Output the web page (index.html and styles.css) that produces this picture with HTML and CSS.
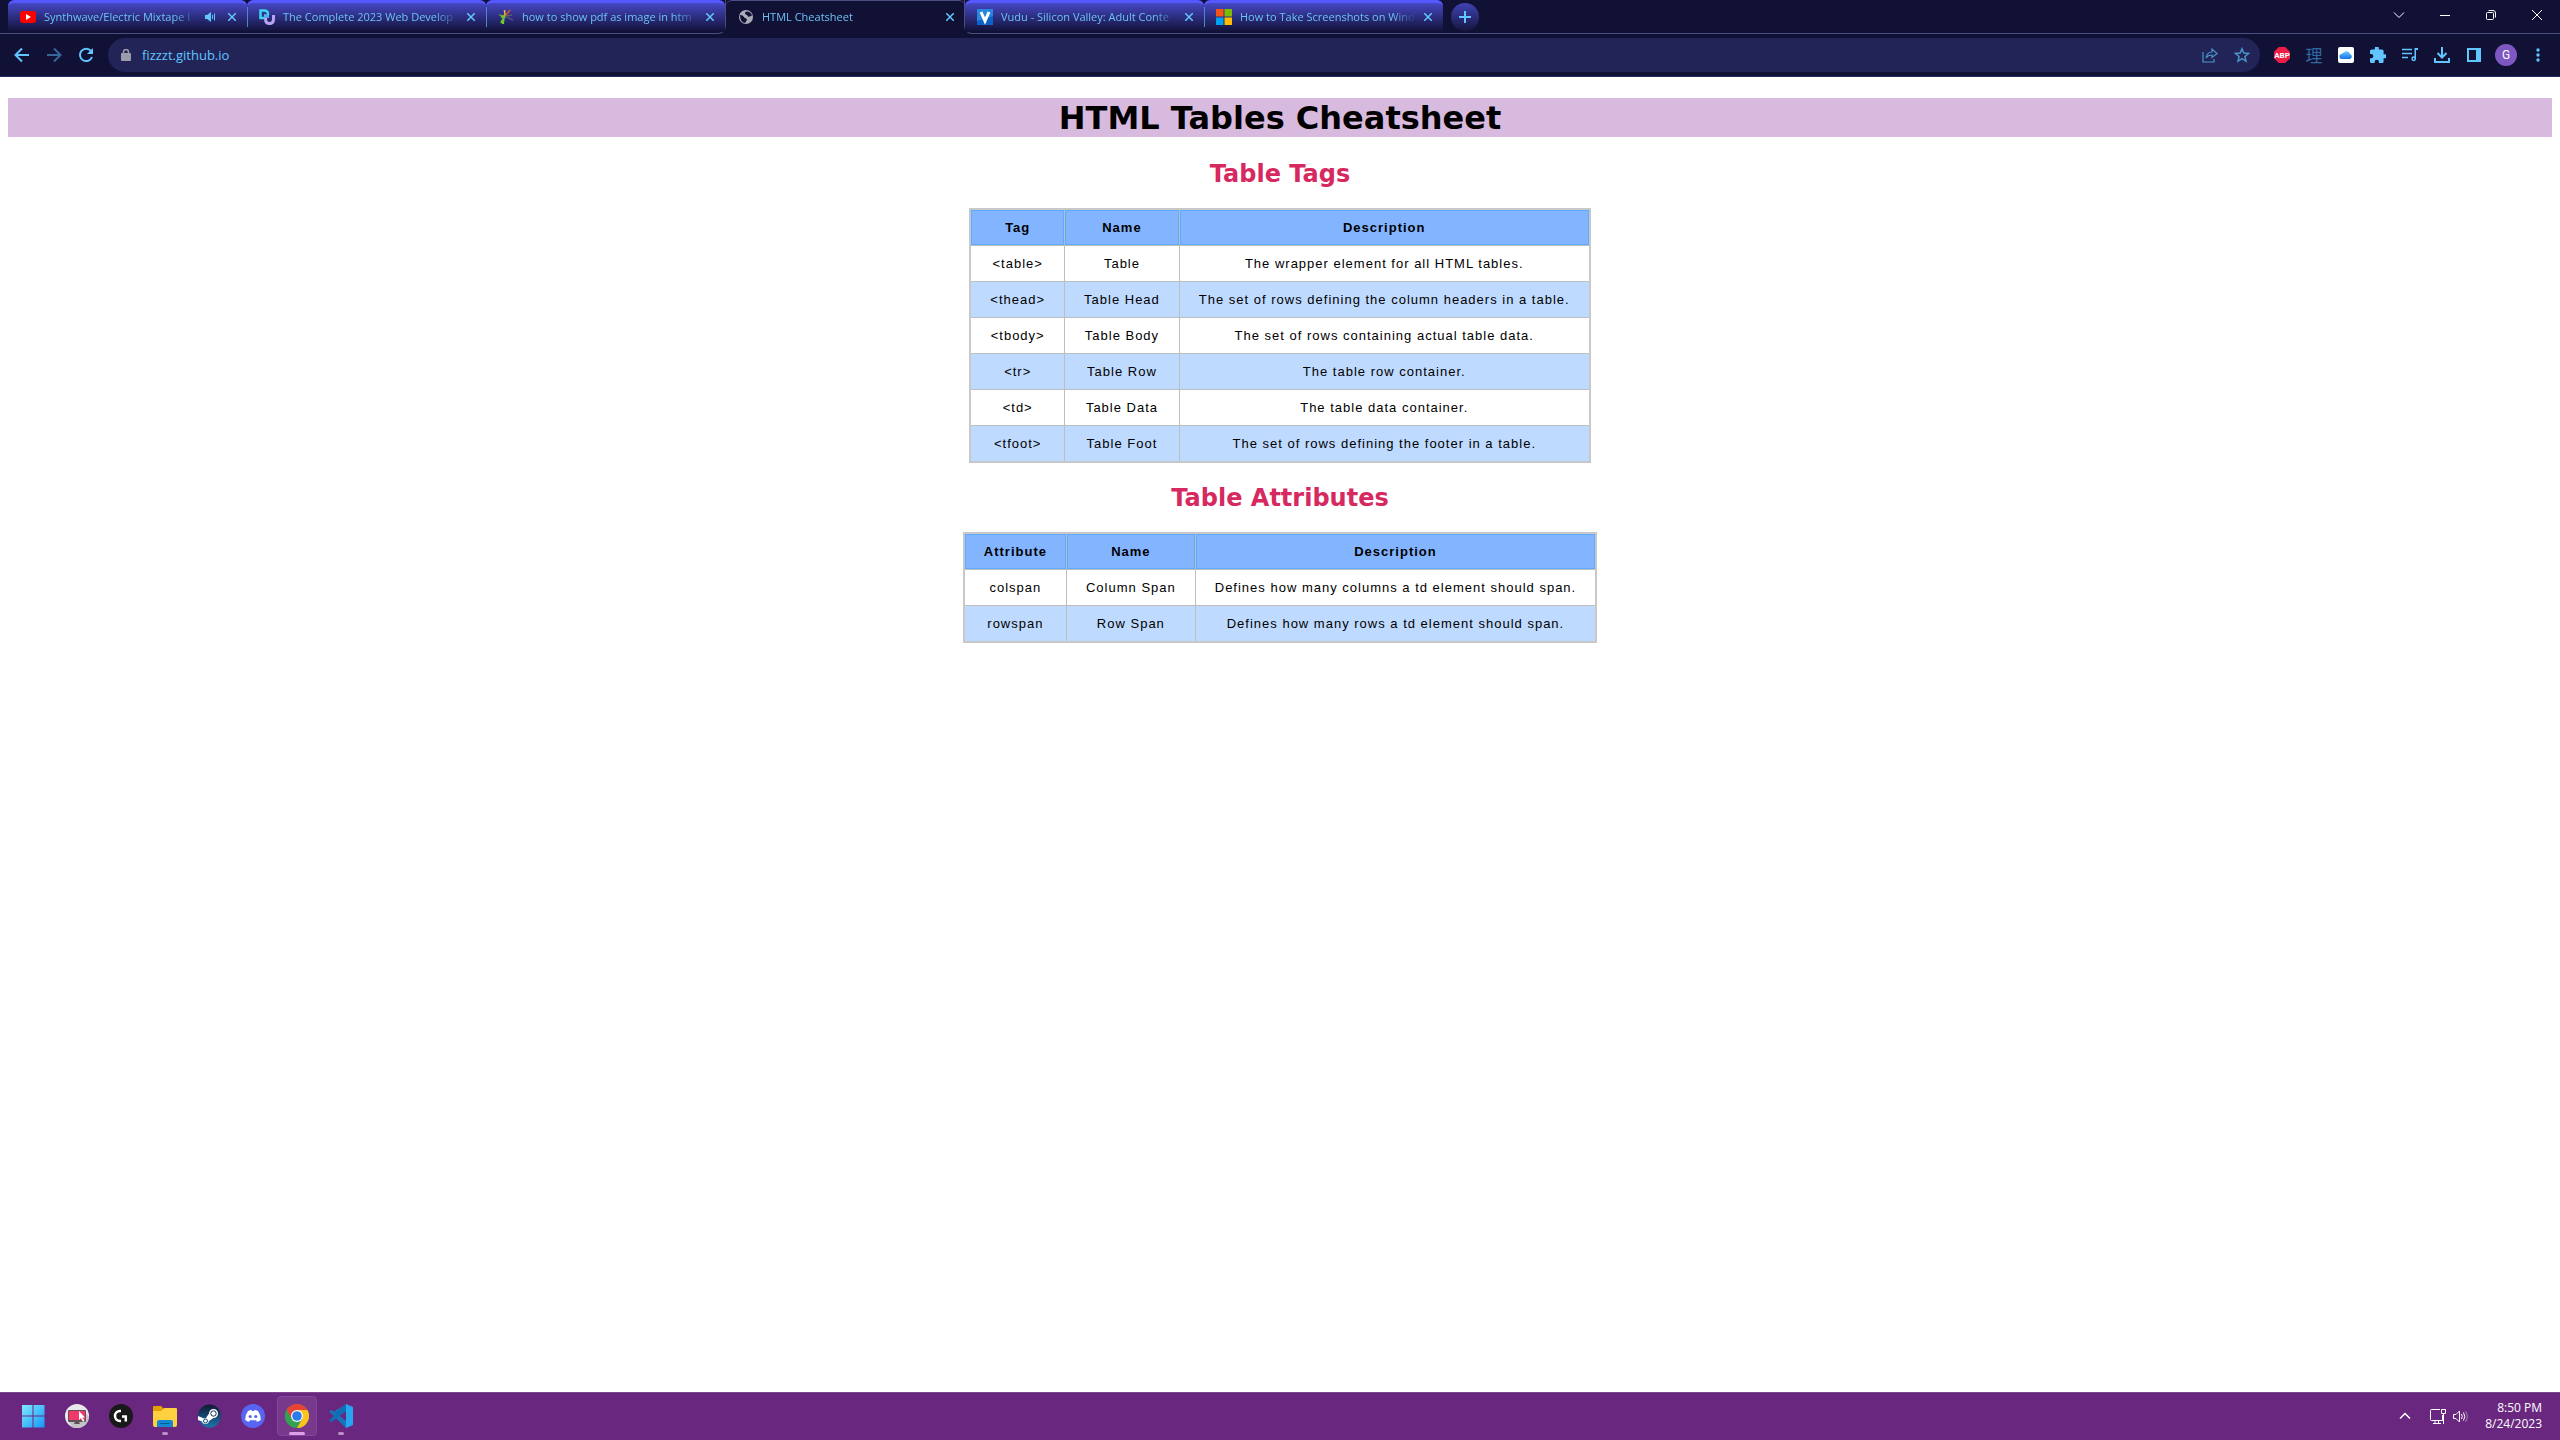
FILE: index.html
```html
<!DOCTYPE html>
<html lang="en">
<head>
<meta charset="utf-8">
<title>HTML Cheatsheet</title>
<link rel="stylesheet" href="styles.css">
</head>
<body>
<header class="browser">
  <div class="strip">
    <div class="group group-left">
      <div class="tab">
        <svg class="favicon" viewBox="0 0 16 16"><rect y="2" width="16" height="12" rx="3" fill="#f00"/><path d="M6 5l5 3-5 3z" fill="#fff"/></svg>
        <button class="title">Synthwave/Electric Mixtape I</button>
        <button class="mini sound" aria-label="Mute tab"><svg width="12" height="12" viewBox="0 0 12 12"><path d="M1 4h2l4-3v10L3 8H1z" fill="currentColor"/><path d="M8.500 4v4M10.500 2.500v7" stroke="currentColor" stroke-width="1" fill="none"/></svg></button>
        <button class="mini" aria-label="Close tab"><svg width="8" height="8" viewBox="0 0 8 8"><path class="line" d="M0 0l8 8M8 0L0 8"/></svg></button>
      </div>
      <div class="tab">
        <svg class="favicon" viewBox="0 0 16 16"><path d="M1.500 1.500H5q4 0 4 3.500T5 9H1.500z" fill="none" stroke="#3cd5ee" stroke-width="2.500"/><path d="M6.500 8v2q0 4.500 4 4.500t4-4.500V6" fill="none" stroke="#b9a1f3" stroke-width="3"/><path d="M5 5q5 0 5 4H5z" fill="#5aa8f2"/></svg>
        <button class="title">The Complete 2023 Web Develop</button>
        <button class="mini" aria-label="Close tab"><svg width="8" height="8" viewBox="0 0 8 8"><path class="line" d="M0 0l8 8M8 0L0 8"/></svg></button>
      </div>
      <div class="tab">
        <svg class="favicon" viewBox="0 0 16 16" fill="none" stroke-width="1.500"><path d="M6 7L1 6" stroke="#6a8a3a"/><path d="M7 7L6.500 1" stroke="#e8b93c"/><path d="M8 6l4-5" stroke="#e0562f"/><path d="M8 7l6-1" stroke="#5b5b66"/><path d="M8 8l7 3" stroke="#5a4a86"/><path d="M7 7l-4 7M6 6l-1 9M3 8l4-1" stroke="#6fc72e" stroke-width="2"/></svg>
        <button class="title">how to show pdf as image in htm</button>
        <button class="mini" aria-label="Close tab"><svg width="8" height="8" viewBox="0 0 8 8"><path class="line" d="M0 0l8 8M8 0L0 8"/></svg></button>
      </div>
    </div>
    <div class="tab active">
      <svg class="favicon" viewBox="0 0 16 16"><circle cx="8" cy="8" r="7" fill="#a9adb8"/><path d="M2 6q3 0 4 2t2 1l1 2-2 3q-5-1-5-8zM8 2.500q-2 2 0 3t2 2 4-1q-1-4-6-4z" fill="#111136"/></svg>
      <button class="title">HTML Cheatsheet</button>
      <button class="mini" aria-label="Close tab"><svg width="8" height="8" viewBox="0 0 8 8"><path class="line" d="M0 0l8 8M8 0L0 8"/></svg></button>
    </div>
    <div class="group group-right">
      <div class="tab">
        <svg class="favicon" viewBox="0 0 16 16"><rect width="16" height="16" fill="#0d62c9"/><path d="M0 0h16v7L0 12z" fill="#2787e0"/><path d="M4 3l4 9 4-9" fill="none" stroke="#fff" stroke-width="3"/></svg>
        <button class="title">Vudu - Silicon Valley: Adult Conte</button>
        <button class="mini" aria-label="Close tab"><svg width="8" height="8" viewBox="0 0 8 8"><path class="line" d="M0 0l8 8M8 0L0 8"/></svg></button>
      </div>
      <div class="tab">
        <svg class="favicon" viewBox="0 0 16 16"><path d="M0 0h7.500v7.500H0z" fill="#f65314"/><path d="M8.500 0H16v7.500H8.500z" fill="#7cbb00"/><path d="M0 8.500h7.500V16H0z" fill="#00a1f1"/><path d="M8.500 8.500H16V16H8.500z" fill="#ffbb00"/></svg>
        <button class="title">How to Take Screenshots on Wind</button>
        <button class="mini" aria-label="Close tab"><svg width="8" height="8" viewBox="0 0 8 8"><path class="line" d="M0 0l8 8M8 0L0 8"/></svg></button>
      </div>
      <button class="new-tab" aria-label="New tab"><svg width="12" height="12" viewBox="0 0 12 12"><path d="M6 0v12M0 6h12" stroke="currentColor" stroke-width="2"/></svg></button>
      <div class="window-controls">
        <button aria-label="Search tabs"><svg width="12" height="12" viewBox="0 0 12 12"><path class="thin" d="M1 3.500l5 5 5-5"/></svg></button>
        <button aria-label="Minimize"><svg width="10" height="10" viewBox="0 0 10 10"><path class="thin" d="M0 5.500h10"/></svg></button>
        <button aria-label="Restore"><svg width="10" height="10" viewBox="0 0 10 10"><rect class="thin" x=".5" y="2.500" width="7" height="7" rx="1"/><path class="thin" d="M2.500.5H7q2.500 0 2.500 2.500v4.500"/></svg></button>
        <button aria-label="Close"><svg width="10" height="10" viewBox="0 0 10 10"><path class="thin" d="M0 0l10 10M10 0L0 10"/></svg></button>
      </div>
    </div>
  </div>
  <div class="toolbar">
    <button class="tool" aria-label="Back"><svg width="16" height="16" viewBox="0 0 16 16"><path d="M15 8H2M8 1.500L1.500 8 8 14.500" fill="none" stroke="currentColor" stroke-width="2"/></svg></button>
    <button class="tool dim" aria-label="Forward"><svg width="16" height="16" viewBox="0 0 16 16"><path d="M1 8h13M8 1.500L14.500 8 8 14.500" fill="none" stroke="currentColor" stroke-width="2"/></svg></button>
    <button class="tool" aria-label="Reload"><svg width="16" height="16" viewBox="0 0 16 16"><path d="M13 4a6.200 6.200 0 1 0 1 6" fill="none" stroke="currentColor" stroke-width="2"/><path d="M15 1v6H9z" fill="currentColor"/></svg></button>
    <div class="omnibox">
      <svg class="lock" width="10" height="12" viewBox="0 0 10 12"><rect x="0" y="4" width="10" height="8" rx="1" fill="currentColor"/><path d="M2.500 5V3a2.500 2.500 0 0 1 5 0v2" fill="none" stroke="currentColor" stroke-width="1.500"/></svg>
      <input class="url" type="text" value="fizzzt.github.io" aria-label="Address">
      <button class="tool soft" aria-label="Share"><svg width="16" height="16" viewBox="0 0 16 16" fill="none" stroke="currentColor" stroke-width="1.200"><path d="M1 5v10h11v-3"/><path d="M4 11q1-6 6-6V2l5 4.500-5 4V8q-4 0-6 3z"/></svg></button>
      <button class="tool soft" aria-label="Bookmark"><svg width="16" height="16" viewBox="0 0 16 16"><path d="M8 1.800l1.800 4.300 4.700.4-3.600 3 1.100 4.600L8 11.700l-4 2.400 1.100-4.600-3.600-3 4.700-.4z" fill="none" stroke="currentColor" stroke-width="1.500"/></svg></button>
    </div>
    <button class="tool abp" aria-label="Adblock Plus">ABP</button>
    <button class="tool kanji" aria-label="Rikaikun">理</button>
    <button class="tool" aria-label="iCloud"><svg width="16" height="16" viewBox="0 0 16 16"><defs><linearGradient id="cloud" x2="0" y2="1"><stop stop-color="#65c8fb"/><stop offset="1" stop-color="#1674e8"/></linearGradient></defs><rect width="16" height="16" rx="2" fill="#fff"/><path d="M4 12a2.500 2.500 0 0 1-.3-5A2.500 2.500 0 0 1 6 5.500a3.500 3.500 0 0 1 6 1.500 2.600 2.600 0 0 1 0 5z" fill="url(#cloud)"/></svg></button>
    <button class="tool" aria-label="Extensions"><svg width="16" height="16" viewBox="2 2 20 20"><path fill="currentColor" d="M20.500 11H19V7c0-1.100-.9-2-2-2h-4V3.500a2.500 2.500 0 0 0-5 0V5H4c-1.100 0-2 .9-2 2v3.800h1.500a2.700 2.700 0 0 1 0 5.400H2V20c0 1.100.9 2 2 2h3.800v-1.500a2.700 2.700 0 0 1 5.400 0V22H17c1.100 0 2-.9 2-2v-4h1.500a2.500 2.500 0 0 0 0-5z"/></svg></button>
    <button class="tool" aria-label="Media"><svg width="16" height="14" viewBox="0 0 16 14"><path d="M0 1.500h10M0 5.500h10M0 9.500h6" stroke="currentColor" stroke-width="1.500"/><path d="M12.500 0H16v2h-2v9h-1.500z" fill="currentColor"/><circle cx="11.700" cy="10.800" r="1.700" fill="none" stroke="currentColor" stroke-width="1.500"/></svg></button>
    <button class="tool" aria-label="Downloads"><svg width="16" height="16" viewBox="0 0 16 16"><path d="M8 0v10M3.500 6L8 10.500 12.500 6M1 11v4h14v-4" fill="none" stroke="currentColor" stroke-width="2"/></svg></button>
    <button class="tool" aria-label="Side panel"><svg width="14" height="14" viewBox="0 0 14 14"><rect x="1" y="1" width="12" height="12" fill="none" stroke="currentColor" stroke-width="2"/><path d="M9 0h5v14H9z" fill="currentColor"/></svg></button>
    <button class="tool" aria-label="Profile"><span class="avatar">G</span></button>
    <button class="tool" aria-label="Menu"><svg width="4" height="14" viewBox="0 0 4 14" fill="currentColor"><circle cx="2" cy="2" r="1.700"/><circle cx="2" cy="7" r="1.700"/><circle cx="2" cy="12" r="1.700"/></svg></button>
  </div>
</header>

<main class="page">
  <h1>HTML Tables Cheatsheet</h1>
  <h2>Table Tags</h2>
  <table>
    <thead><tr><th>Tag</th><th>Name</th><th>Description</th></tr></thead>
    <tbody>
      <tr><td>&lt;table&gt;</td><td>Table</td><td>The wrapper element for all HTML tables.</td></tr>
      <tr><td>&lt;thead&gt;</td><td>Table Head</td><td>The set of rows defining the column headers in a table.</td></tr>
      <tr><td>&lt;tbody&gt;</td><td>Table Body</td><td>The set of rows containing actual table data.</td></tr>
      <tr><td>&lt;tr&gt;</td><td>Table Row</td><td>The table row container.</td></tr>
      <tr><td>&lt;td&gt;</td><td>Table Data</td><td>The table data container.</td></tr>
      <tr><td>&lt;tfoot&gt;</td><td>Table Foot</td><td>The set of rows defining the footer in a table.</td></tr>
    </tbody>
  </table>
  <h2>Table Attributes</h2>
  <table>
    <thead><tr><th>Attribute</th><th>Name</th><th>Description</th></tr></thead>
    <tbody>
      <tr><td>colspan</td><td>Column Span</td><td>Defines how many columns a td element should span.</td></tr>
      <tr><td>rowspan</td><td>Row Span</td><td>Defines how many rows a td element should span.</td></tr>
    </tbody>
  </table>
</main>

<footer class="taskbar">
  <div class="apps">
    <button class="app" aria-label="Start"><svg viewBox="0 0 24 24"><defs><linearGradient id="win" x2="1" y2="1"><stop stop-color="#7fe9ff"/><stop offset="1" stop-color="#1597f5"/></linearGradient></defs><path d="M1 1h10.500v10.500H1zM12.500 1H23.500v10.500H12.500zM1 12.500h10.500V23.500H1zM12.500 12.500H23.500V23.500H12.500z" fill="url(#win)"/></svg></button>
    <button class="app" aria-label="Remote display"><svg viewBox="0 0 24 24"><circle cx="12" cy="12" r="12" fill="#e9e9ec"/><path d="M4 18l16-10 4 5q-1 10-12 11-3 0-5-1z" fill="#c2c2c8"/><rect x="3" y="6" width="18" height="12" rx="1" fill="#5c5257"/><rect x="4" y="7" width="16" height="9" fill="#f0386b"/><path d="M10 18h4l1 2H9z" fill="#5c5257"/><path d="M14 7v9l2-2 2 4 1.500-1-2-3.500H20z" fill="#fff"/></svg></button>
    <button class="app" aria-label="Logitech G HUB"><svg viewBox="0 0 24 24"><circle cx="12" cy="12" r="12" fill="#191919"/><path d="M12 7h-1a5 5 0 0 0 0 10h1M13 12.500h5M16.800 12v5.500" fill="none" stroke="#fff" stroke-width="2.500"/></svg></button>
    <button class="app running" aria-label="File Explorer"><svg viewBox="0 0 24 24"><path d="M0 3q0-1 1-1h7l2 2v5H0z" fill="#e2a100"/><path d="M0 7h8l3-3h12q1 0 1 1v16q0 2-2 2H2q-2 0-2-2z" fill="#ffd141"/><path d="M4 23v-5q0-2 2-2h12q2 0 2 2v5z" fill="#1388d3"/><path d="M7 19h10v1H7z" fill="#07598f"/></svg></button>
    <button class="app" aria-label="Steam"><svg viewBox="0 0 24 24"><defs><linearGradient id="steam" x2="0" y2="1"><stop stop-color="#101834"/><stop offset="1" stop-color="#1c76a8"/></linearGradient></defs><circle cx="12.500" cy="12" r="11.500" fill="url(#steam)"/><path d="M1 12l6 2.500 2-.5 3-4.500A4.500 4.500 0 1 1 16.500 14L12 17q-.5 3-3.500 3T5 17.500L1 16z" fill="#fff"/><circle cx="16.500" cy="9.500" r="2.700" fill="#fff" stroke="#17304f"/><circle cx="8.500" cy="17" r="2" fill="none" stroke="#17486f"/></svg></button>
    <button class="app" aria-label="Discord"><svg viewBox="0 0 24 24"><circle cx="12" cy="12" r="12" fill="#5865f2"/><path d="M7 7q2-1 3.500-1l.5 1h2l.5-1Q15 6 17 7q3 4 2.700 9-2 1.500-3.700 1.800l-1-1.500H9l-1 1.500Q6 17.500 4.300 16 4 11 7 7z" fill="#fff"/><circle cx="9.200" cy="12.500" r="1.600" fill="#5865f2"/><circle cx="14.800" cy="12.500" r="1.600" fill="#5865f2"/></svg></button>
    <button class="app running current" aria-label="Google Chrome"><svg viewBox="0 0 24 24"><circle cx="12" cy="12" r="12" fill="#34a153"/><path d="M12 12L1.600 6a12 12 0 0 1 20.800 0z" fill="#e94335"/><path d="M12 6h10.400A12 12 0 0 1 12 24l5.200-9z" fill="#fcc31e"/><path d="M1.600 6l5.200 9L12 12l-2-6z" fill="#e94335"/><path d="M1.600 6l5.200 9 5.200 3-3 5.600A12 12 0 0 1 1.600 6z" fill="#34a153"/><circle cx="12" cy="12" r="6" fill="#fff"/><circle cx="12" cy="12" r="4.800" fill="#2c7be9"/></svg></button>
    <button class="app running" aria-label="Visual Studio Code"><svg viewBox="0 0 24 24"><path d="M17 0L7 9.500 2.500 6 0 7.200 17 24l1-6.500L5 7.800z" fill="#1278be"/><path d="M0 16.800L2.500 18 18 6.500 17 0z" fill="#0b70b6"/><path d="M17 0l7 3v18l-7 3z" fill="#27a5f0"/></svg></button>
  </div>
  <div class="tray">
    <button class="tray-icon" aria-label="Show hidden icons"><svg width="12" height="12" viewBox="0 0 12 12"><path d="M1 8.500L6 3.500l5 5" fill="none" stroke="currentColor" stroke-width="1.500"/></svg></button>
    <button class="tray-status" aria-label="Network and volume">
      <svg width="17" height="17" viewBox="0 0 17 17" fill="none" stroke="currentColor"><path d="M11 1.500H2.500q-1 0-1 1v9q0 1 1 1h11V7M4 15.500h8M6 12.500v3M9.500 12.500v3"/><path d="M12.500 1.500h4v4h-4zM14.500 5.500V16"/></svg>
      <svg width="17" height="17" viewBox="0 0 17 17" fill="none" stroke="currentColor"><path d="M1.500 6.500H4L7.500 3v11L4 10.500H1.500zM9.500 6q1.500 2.500 0 5M11.500 4.500q2.500 4 0 8"/><path d="M13.500 3q3.500 5.500 0 11" opacity=".4"/></svg>
    </button>
    <button class="clock"><time>8:50 PM</time><time>8/24/2023</time></button>
  </div>
</footer>
</body>
</html>
```
FILE: styles.css
```css
* { box-sizing: border-box; }

body {
  margin: 0;
  min-height: 100vh;
  display: flex;
  flex-direction: column;
  background: #fff;
  font-family: "Open Sans", "Noto Sans", sans-serif;
}

button {
  border: 0;
  padding: 0;
  background: none;
  color: inherit;
  font: inherit;
  display: flex;
  align-items: center;
  justify-content: center;
}

svg { flex: none; display: block; }

/* Browser frame */
.browser {
  background: #111136;
  color: #61c6ff;
  border-bottom: 1px solid #1c2b60;
}

.strip { display: flex; height: 34px; }

.group {
  display: flex;
  border-bottom: 1px solid #4c4c80;
}

.group-left {
  padding-left: 8px;
  border-right: 1px solid #4c4c80;
  border-bottom-right-radius: 8px;
}

.group-right {
  flex: 1;
  margin-left: -1px;
  border-left: 1px solid #4c4c80;
  border-bottom-left-radius: 8px;
}

.tab {
  width: 239px;
  height: 32px;
  padding: 0 7px 2px 12px;
  display: flex;
  align-items: center;
  border-top: 3px solid #5558ff;
  border-radius: 6px 6px 0 0;
  background: linear-gradient(#4648c4, #111136);
  font-size: 11px;
}

.tab + .tab {
  background:
    linear-gradient(#4c88d0, #4c88d0) 0 4px / 1px 20px no-repeat,
    linear-gradient(#4648c4, #111136);
}

.tab.active {
  height: 34px;
  border-top: 1px solid #4c4c80;
  background: none;
}

.favicon { width: 16px; height: 16px; }

.title {
  flex: 1;
  min-width: 0;
  height: 20px;
  margin: 0 4px 0 8px;
  display: block;
  overflow: hidden;
  line-height: 20px;
  text-align: left;
  white-space: nowrap;
  color: #6cc2f5;
  mask-image: linear-gradient(to left, transparent, #000 24px);
}

.mini { width: 16px; height: 16px; }
.sound { margin-right: 6px; }
.line { fill: none; stroke: currentColor; stroke-width: 1.5; }

.new-tab {
  width: 28px;
  height: 28px;
  margin: 3px 0 0 8px;
  border-radius: 50%;
  background: linear-gradient(#4042b4, #16163f);
}

.window-controls {
  display: flex;
  margin-left: auto;
  color: #fff;
}

.window-controls button { width: 46px; height: 29px; }
.thin { fill: none; stroke: currentColor; stroke-width: 1; }

.toolbar {
  display: flex;
  align-items: center;
  padding: 4px 6px;
}

.tool {
  flex: none;
  width: 32px;
  height: 32px;
}

.dim { color: #34669a; }
.soft { color: #4a94c8; }

.omnibox {
  flex: 1;
  min-width: 0;
  height: 34px;
  margin: 0 6px;
  padding: 0 2px 0 13px;
  display: flex;
  align-items: center;
  border-radius: 17px;
  background: #222458;
}

.lock { color: #9b9cab; }

.url {
  flex: 1;
  min-width: 0;
  margin-left: 11px;
  padding: 0;
  border: 0;
  background: none;
  color: #61c6ff;
  font: 13px "Open Sans", "Noto Sans", sans-serif;
}

.abp {
  width: 16px;
  height: 16px;
  margin: 0 8px;
  background: #ed1e45;
  clip-path: polygon(30% 0, 70% 0, 100% 30%, 100% 70%, 70% 100%, 30% 100%, 0 70%, 0 30%);
  color: #fff;
  font: bold 8px Roboto, sans-serif;
}

.kanji {
  color: #3068a4;
  font: 17px/20px "Noto Sans CJK JP", sans-serif;
}

.avatar {
  width: 22px;
  height: 22px;
  border-radius: 50%;
  background: #7e57c2;
  color: #fff;
  font: 12px/22px Roboto, sans-serif;
}

/* Cheatsheet page */
.page {
  flex: 1;
  padding: 0 8px;
  text-align: center;
}

h1, h2 {
  padding-top: 2px;
  font-family: Verdana, "DejaVu Sans", sans-serif;
}

h1 {
  margin: 21px 0 22px;
  background: #d8bade;
  color: #000;
  font-size: 32px;
  line-height: 37px;
}

h2 {
  margin: 20px 0;
  color: #d6295f;
  font-size: 24px;
  line-height: 27px;
}

table {
  margin: 0 auto;
  border: 2px solid #c8c8c8;
  border-collapse: collapse;
  color: #000;
  font: 13px/15px Arial, "Liberation Sans", sans-serif;
  letter-spacing: 1px;
}

td, th {
  padding: 10px 19px;
  border: 1px solid #bebebe;
}

th { background: #82b4ff; box-shadow: inset 0 0 0 1px #5cabff; }
tbody tr:nth-child(even) { background: #bfdaff; }

/* Windows taskbar */
.taskbar {
  height: 48px;
  display: flex;
  justify-content: space-between;
  padding: 0 12px 1px;
  border-top: 1px solid #7d4690;
  background: #6a2780;
  color: #fff;
}

.apps { display: flex; align-items: center; gap: 4px; padding-left: 1px; }

.app {
  position: relative;
  width: 40px;
  height: 40px;
  border-radius: 4px;
}

.app svg { width: 24px; height: 24px; }
.current { background: #78398d; border: 1px solid #82479a; }

.running::after {
  content: "";
  position: absolute;
  bottom: 1px;
  width: 6px;
  height: 3px;
  border-radius: 2px;
  background: #b592c4;
}

.current::after { bottom: 0; width: 16px; background: #dc9fe8; }

.tray { display: flex; align-items: center; padding-right: 6px; }
.tray-icon { width: 32px; height: 40px; }
.tray-status { height: 40px; gap: 6px; margin: 0 16px 0 8px; }

.clock {
  flex-direction: column;
  align-items: flex-end;
  font-size: 12px;
  line-height: 16px;
}
```
